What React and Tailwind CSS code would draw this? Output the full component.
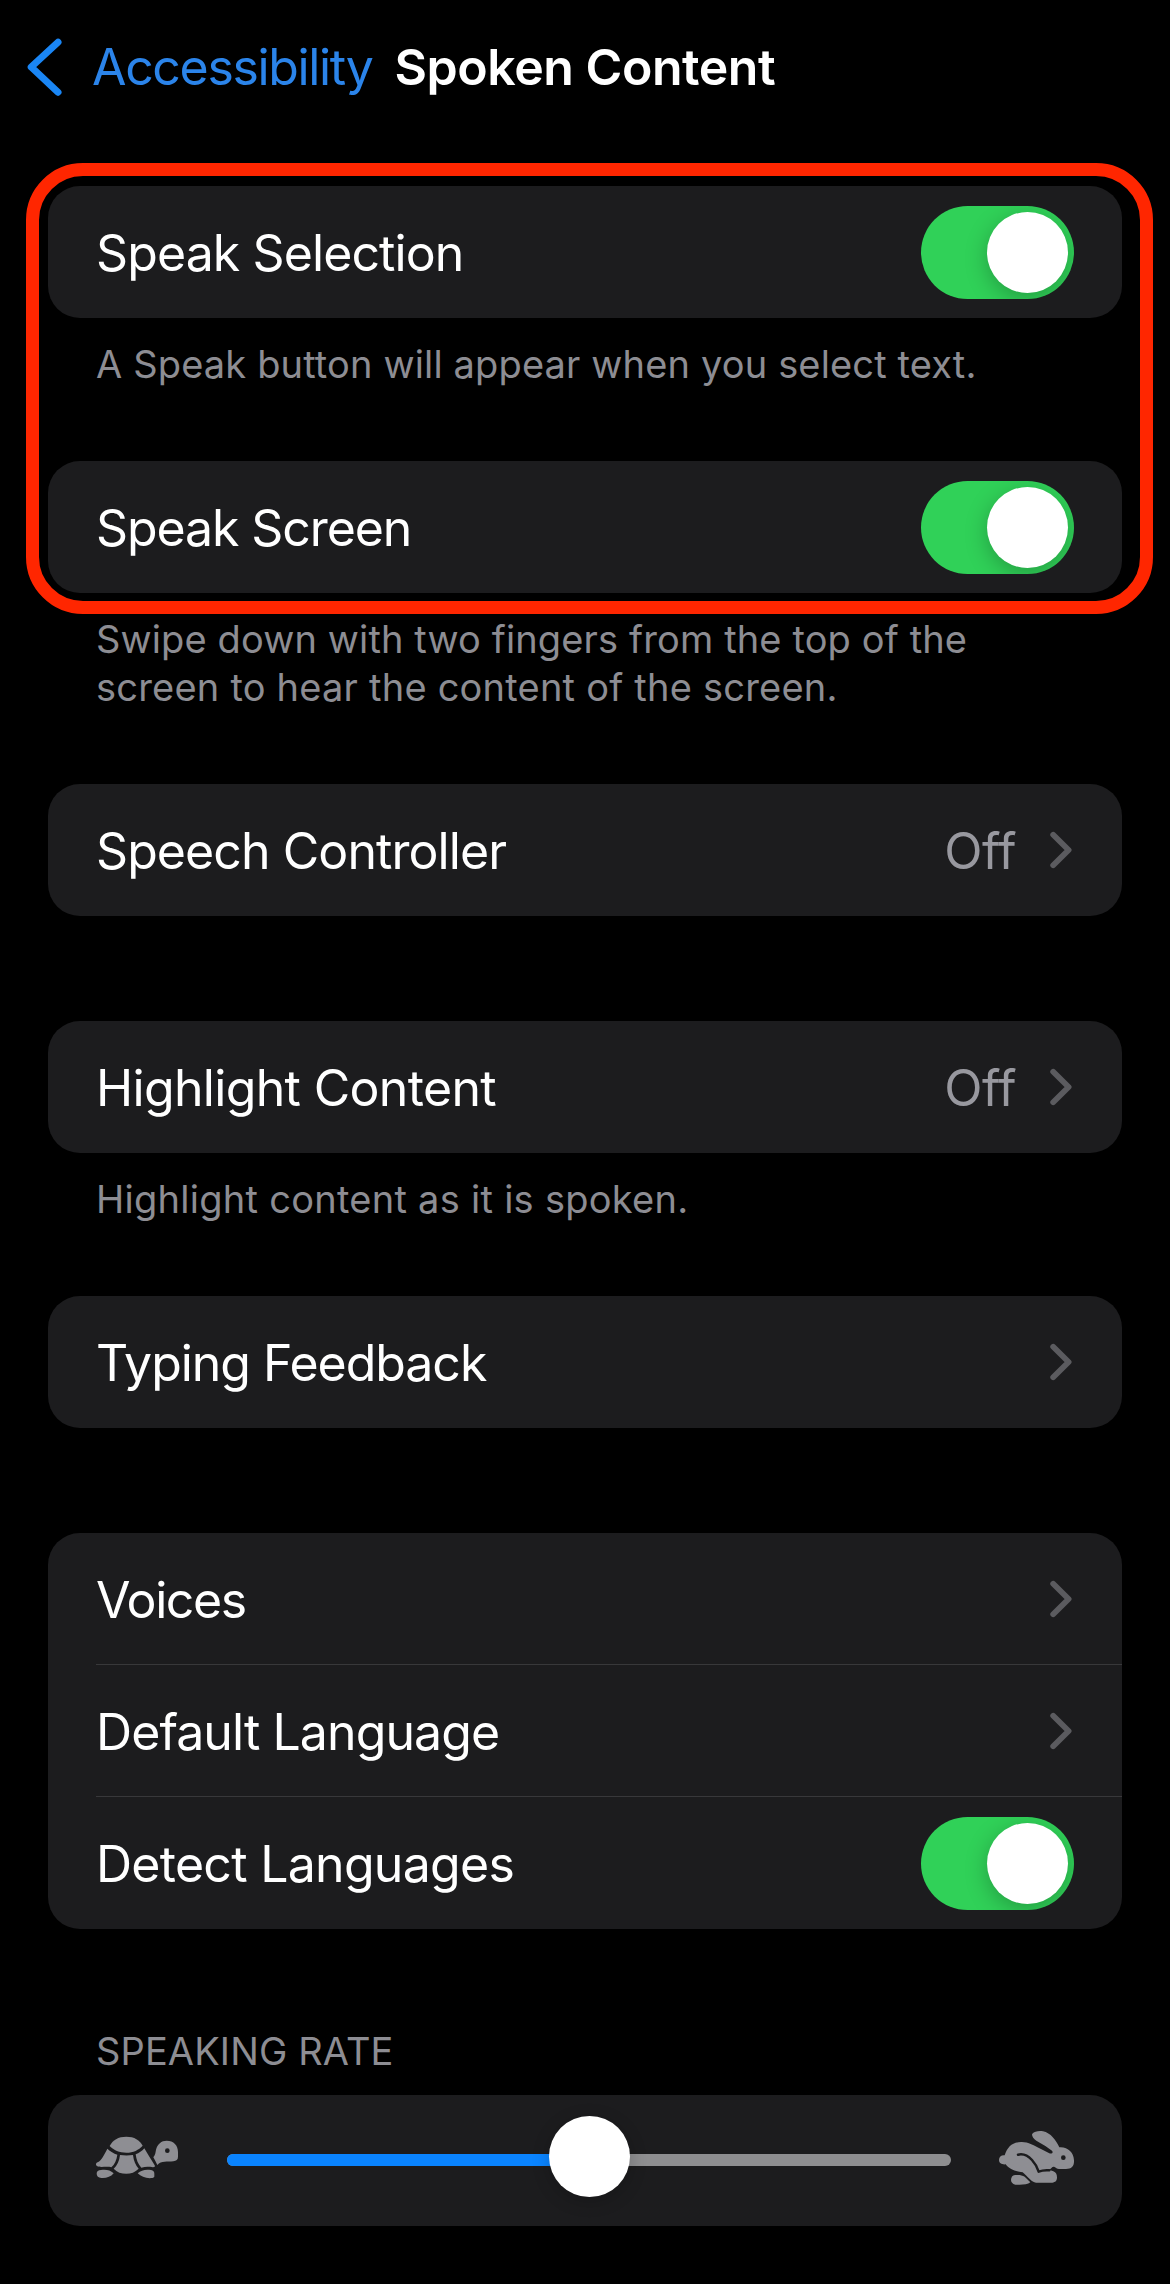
function Toggle() {
  return (
    <div role="switch" aria-checked="true" className="flex h-[93px] w-[153px] items-center justify-end overflow-hidden rounded-full bg-[#30d158] pr-1.5">
      <div className="size-[81px] rounded-full bg-white shadow-[0_6px_22px_rgba(0,0,0,0.25)]" />
    </div>
  );
}

function Chevron() {
  return (
    <svg className="mr-px h-[38px] w-6" viewBox="0 0 24 38" fill="none" stroke="#5b5b5f" strokeWidth="5.8" strokeLinecap="round" strokeLinejoin="round">
      <path d="M4.2 3.8 19.6 19 4.2 34.2" />
    </svg>
  );
}

function Row({ label, tracking, value, toggle, divider }) {
  return (
    <div className="pl-12">
      <div className={`flex h-[132px] items-center justify-between pr-12 ${divider ? "border-b border-[#38383a]" : ""}`}>
        <span className={`pt-0.5 text-[50px] leading-[60px] text-white ${tracking}`}>{label}</span>
        {toggle ? (
          <Toggle />
        ) : (
          <div className="flex items-center gap-[33px]">
            {value && <span className="pt-0.5 text-[50px] leading-[60px] tracking-[-0.5px] text-[#98989f]">{value}</span>}
            <Chevron />
          </div>
        )}
      </div>
    </div>
  );
}

function Card({ children }) {
  return <div className="rounded-[32px] bg-[#1c1c1e]">{children}</div>;
}

function Note({ children }) {
  return <div className="mt-[22px] mb-[73px] pl-12 text-[38px] leading-[48px] whitespace-nowrap text-[#8d8d93]">{children}</div>;
}

function Turtle() {
  return (
    <svg className="mb-[6px] h-[45px] w-[85px] shrink-0" viewBox="105 105 255 135" fill="#8e8e93">
      <path d="M149 138C158 120 175 110 199 110C223 110 239 120 248 137C236 150 220 158 199 158C178 158 161 151 149 138Z" />
      <path d="M142 146C151 154 161 160 172 164C170 180 164 193 154 202C144 198 120 203 112 199C106 196 107 189 113 187C125 180 133 164 142 146Z" />
      <path d="M180 165C192 167 207 167 219 165C221 183 227 196 236 206C225 217 213 221 199 221C184 221 171 217 161 206C172 196 178 183 180 165Z" />
      <path d="M227 163C237 159 246 153 253 145C262 161 273 177 284 196C286 200 284 202 279 202C266 200 256 200 244 203C234 193 229 179 227 163Z" />
      <path d="M123 210C138 208 151 210 161 220C152 231 139 235 124 234C115 233 110 228 110 221C110 214 115 210 123 210Z" />
      <path d="M233 220C244 210 257 207 273 210C280 211 283 215 283 221V229C283 232 281 233 277 234C259 236 244 231 233 220Z" />
      <path fillRule="evenodd" d="M292 195C288 187 284 180 280 172C287 163 286 157 288 149C292 132 304 122 320 122C341 122 354 136 354 156V170C354 179 349 182 340 184C322 187 304 181 292 195ZM322 145A7 7 0 1 0 322 159A7 7 0 1 0 322 145Z" />
    </svg>
  );
}

function Rabbit() {
  return (
    <svg className="mb-[6px] h-[56px] w-[77px] shrink-0" viewBox="114 87 231 168" fill="#8e8e93">
      <path d="M134 163C142 137 158 123 183 123C203 122 222 133 243 144L268 157C275 160 281 154 276 149L256 135L229 119C219 112 214 103 217 98C223 91 237 89 249 91C272 96 288 117 298 139C323 137 341 154 342 178C343 196 335 204 318 204H297C290 204 289 199 282 197C276 196 274 203 267 206L280 211C288 214 291 220 291 229C291 240 286 244 277 245H228C215 245 204 227 188 214C169 211 149 207 137 190C126 191 117 187 117 177C117 167 124 162 134 163Z" />
      <path d="M174 161C190 157 205 165 216 177C226 188 232 199 236 212C246 208 256 207 268 208" fill="none" stroke="#1c1c1e" strokeWidth="7.5" strokeLinecap="round" strokeLinejoin="round" />
      <circle cx="310" cy="170" r="7" fill="#1c1c1e" />
      <path d="M165 222C178 221 186 222 194 227L211 244C202 252 181 252 166 251C157 249 153 243 153 237C153 229 157 223 165 222Z" />
    </svg>
  );
}

export default function App() {
  return (
    <div className="relative h-[2284px] w-[1170px] overflow-hidden bg-black font-['Inter','Liberation_Sans',sans-serif]">
      <header className="flex h-[186px] items-start pt-[36px] pl-[26px]">
        <svg className="mt-px h-[60px] w-[38px]" viewBox="0 0 38 60" fill="none" stroke="#1a86f5" strokeWidth="7" strokeLinecap="round" strokeLinejoin="round">
          <path d="M32 5.2 5.2 30 32 55.2" />
        </svg>
        <span className="ml-[28px] text-[50px] leading-[62px] tracking-[-1.35px] text-[#2b84ea]">Accessibility</span>
        <h1 className="ml-[22px] text-[50px] leading-[62px] font-semibold tracking-[-0.46px] text-white">Spoken Content</h1>
      </header>

      <main className="px-12">
        <Card>
          <Row label="Speak Selection" tracking="tracking-[-0.9px]" toggle />
        </Card>
        <Note>
          <p className="tracking-[0.15px]">A Speak button will appear when you select text.</p>
        </Note>

        <Card>
          <Row label="Speak Screen" tracking="tracking-[-1.1px]" toggle />
        </Card>
        <Note>
          <p className="tracking-[0.13px]">Swipe down with two fingers from the top of the</p>
          <p className="tracking-[0.22px]">screen to hear the content of the screen.</p>
        </Note>

        <Card>
          <Row label="Speech Controller" tracking="tracking-[-0.92px]" value="Off" />
        </Card>

        <div className="mt-[105px]">
          <Card>
            <Row label="Highlight Content" tracking="tracking-[-0.67px]" value="Off" />
          </Card>
        </div>
        <Note>
          <p className="tracking-[0.27px]">Highlight content as it is spoken.</p>
        </Note>

        <Card>
          <Row label="Typing Feedback" tracking="tracking-[-1.04px]" />
        </Card>

        <div className="mt-[105px]">
          <Card>
            <Row label="Voices" tracking="tracking-[-1.4px]" divider />
            <Row label="Default Language" tracking="tracking-[-0.92px]" divider />
            <Row label="Detect Languages" tracking="tracking-[-0.72px]" toggle />
          </Card>
        </div>

        <h2 className="mt-[98px] mb-5 pl-12 text-[38px] leading-[48px] tracking-[0.12px] text-[#8d8d93]">SPEAKING RATE</h2>
        <Card>
          <div className="flex h-[131px] items-center gap-[47px] pl-[47px]">
            <Turtle />
            <div className="relative mb-px h-3 w-[724px] rounded-full bg-[#8e8e90]">
              <div className="h-3 w-1/2 rounded-full bg-[#0a84ff]" />
              <div className="absolute -top-[38px] left-[322px] size-[81px] rounded-full bg-white shadow-[0_4px_18px_rgba(0,0,0,0.2)]" />
            </div>
            <Rabbit />
          </div>
        </Card>
      </main>

      <div className="pointer-events-none absolute top-[163px] left-[26px] h-[451px] w-[1127px] rounded-[57px] border-[13px] border-[#ff2600]" />
    </div>
  );
}
